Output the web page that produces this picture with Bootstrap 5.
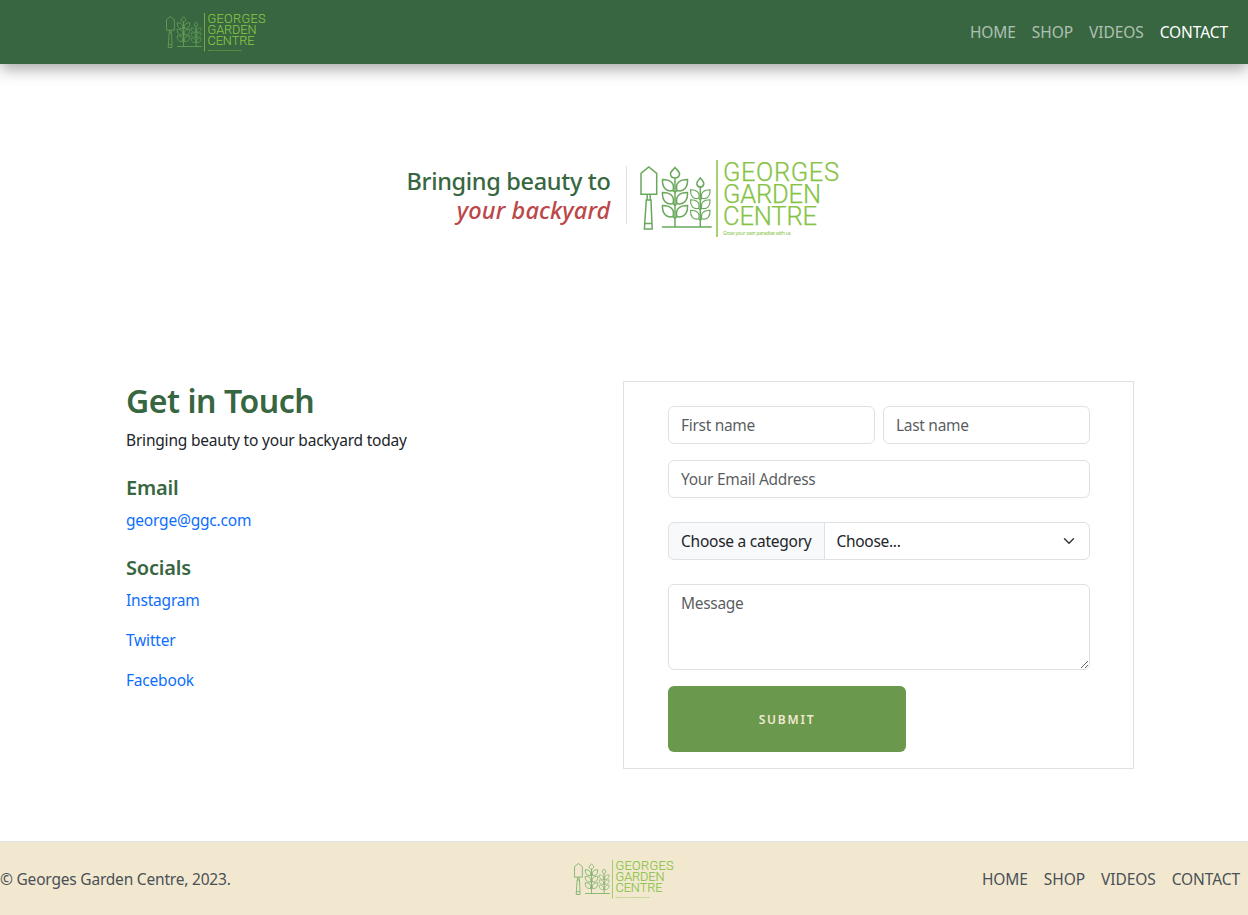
<!DOCTYPE html>
<html lang="en">
<head>
  <meta charset="UTF-8" />
  <meta name="viewport" content="width=device-width, initial-scale=1.0"/>
  <title>Contact - Georges Garden Centre</title>
  <link href="https://cdn.jsdelivr.net/npm/bootstrap@5.3.3/dist/css/bootstrap.min.css" rel="stylesheet" />
  <style>
    body {
      font-family: "Noto Sans", "Open Sans", sans-serif;
      font-size: 15.5px;
      line-height: 24px;
      letter-spacing: -0.2px;
      color: #212529;
    }
    .site-nav {
      height: 64px;
      background: #386641;
      box-shadow: 0 5px 15px rgba(0, 0, 0, .35);
      padding: 0 12px 0 165px;
    }
    .site-nav .nav-link {
      color: rgba(255, 255, 255, .6);
      font-size: 15.5px;
      letter-spacing: -0.08px;
      padding: 8px;
    }
    .site-nav .nav-link.active {
      color: #fff;
    }
    .logo-img {
      display: block;
      width: 202px;
      height: 80px;
    }
    .logo-sm {
      width: 102px;
      height: 40px;
    }
    .logo-icon {
      fill: none;
      stroke: #69a85b;
      stroke-width: 1.5;
    }
    .logo-text {
      fill: #86c344;
      stroke: #86c344;
      stroke-width: .25;
      font-family: Roboto, sans-serif;
      font-weight: 300;
      font-size: 25.5px;
      letter-spacing: 0;
    }
    .logo-tag {
      fill: #86c344;
      font-family: "Noto Sans", sans-serif;
      font-size: 5px;
      letter-spacing: 0;
    }
    .hero-wrap {
      padding: 94px 0 143px;
    }
    .hero-line {
      display: flow-root;
      align-self: flex-start;
      font-size: 23.5px;
      line-height: 29px;
      font-weight: 500;
      letter-spacing: -0.33px;
      color: #386641;
      text-align: right;
      padding-right: 16px;
      margin: 8px 12px 0 0;
      border-right: 1px solid #dee2e6;
    }
    .hero-line span {
      display: block;
      margin: 1px 0 -1px;
    }
    .hero-line em {
      color: #bc4749;
      letter-spacing: 0.13px;
    }
    .contact-wrap {
      width: 1020px;
    }
    .info-col {
      padding-left: 12px;
    }
    .green-head {
      color: #386641;
    }
    .title-head {
      font-weight: 600;
      letter-spacing: -0.45px;
      padding-top: 1px;
      margin-bottom: 8px;
    }
    .sub-head {
      font-weight: 600;
    }
    .form-box {
      border: 1px solid #dee2e6;
      margin-left: -1px;
      padding: 24px 43px 16px 44px;
    }
    .form-box .form-control,
    .form-box .form-select {
      font-size: 15.5px;
      line-height: 24px;
      letter-spacing: -0.3px;
    }
    .form-box .input-group-text {
      font-size: 15.5px;
      line-height: 24px;
      letter-spacing: -0.25px;
    }
    .form-box textarea {
      height: 86px;
    }
    .submit-btn {
      width: 238px;
      height: 66px;
      padding-top: 8px;
      background: #6a994e;
      color: #f2e8cf;
      border: 0;
      font-size: 12px;
      font-weight: 600;
      letter-spacing: 1.8px;
    }
    .site-foot {
      margin-top: 72px;
      height: 74px;
      background: #f2e8cf;
      border-top: 1px solid #dee2e6;
      color: #495057;
    }
    .site-foot .nav-link {
      color: #495057;
      font-size: 15.5px;
      letter-spacing: -0.08px;
      padding: 8px;
    }
  </style>
</head>
<body>
  <svg width="0" height="0" class="position-absolute">
    <defs>
      <path id="leaf" d="M2 5.5C0-2 4.5-5.5 12.5-5.5C13 2 9 7.5 2 5.5ZM2 5.5L0 7.5"/>
      <g id="leaf-pair">
        <use href="#leaf"/>
        <use href="#leaf" transform="scale(-1 1)"/>
      </g>
      <symbol id="ggc-logo" viewBox="0 0 202 80">
        <g class="logo-icon">
          <path d="M2 15.3L9.8 9L17.7 15.3V36.3H2Z"/>
          <path d="M8.2 36.3V42M11.2 36.3V42M7.3 42H12L13.2 71H5.4ZM5.8 65.5H12.8"/>
          <path d="M36 9.5C38.5 12.5 41 14 40.5 16.5C40 19 37.5 20 36 20C34.5 20 32 19 31.5 16.5C31 14 33.5 12.5 36 9.5Z"/>
          <path d="M36 20V69"/>
          <use href="#leaf-pair" transform="translate(36 27)"/>
          <use href="#leaf-pair" transform="translate(36 40)"/>
          <use href="#leaf-pair" transform="translate(36 53)"/>
          <path d="M61.3 20C63.2 22.5 65.2 23.8 64.8 26C64.4 28 62.5 29 61.3 29C60 29 58.2 28 57.8 26C57.4 23.8 59.4 22.5 61.3 20Z"/>
          <path d="M61.3 29V69"/>
          <use href="#leaf-pair" transform="translate(61.3 36) scale(.78)"/>
          <use href="#leaf-pair" transform="translate(61.3 46) scale(.78)"/>
          <use href="#leaf-pair" transform="translate(61.3 56.5) scale(.78)"/>
          <path d="M23 69H72.7"/>
        </g>
        <path d="M78 2V79" fill="none" stroke="#86c344" stroke-width="1.5"/>
        <text class="logo-text" x="84" y="22.5" textLength="116">GEORGES</text>
        <text class="logo-text" x="84" y="44.5" textLength="98">GARDEN</text>
        <text class="logo-text" x="84" y="66.5" textLength="94">CENTRE</text>
        <text class="logo-tag" x="84" y="77" textLength="68">Grow your own paradise with us</text>
      </symbol>
    </defs>
  </svg>

  <nav class="site-nav d-flex align-items-center justify-content-between">
    <a href="#"><svg class="logo-img logo-sm"><use href="#ggc-logo"/></svg></a>
    <ul class="nav">
      <li class="nav-item"><a class="nav-link" href="#">HOME</a></li>
      <li class="nav-item"><a class="nav-link" href="#">SHOP</a></li>
      <li class="nav-item"><a class="nav-link" href="#">VIDEOS</a></li>
      <li class="nav-item"><a class="nav-link active" href="#">CONTACT</a></li>
    </ul>
  </nav>

  <div class="hero-wrap d-flex justify-content-center align-items-center">
    <div class="hero-line"><span>Bringing beauty to<br><em>your backyard</em></span></div>
    <svg class="logo-img"><use href="#ggc-logo"/></svg>
  </div>

  <div class="contact-wrap mx-auto">
    <div class="row g-0">
      <div class="col-6 info-col">
        <h2 class="green-head title-head">Get in Touch</h2>
        <p class="mb-4">Bringing beauty to your backyard today</p>
        <h5 class="green-head sub-head">Email</h5>
        <p class="mb-4"><a class="text-decoration-none" href="#">george@ggc.com</a></p>
        <h5 class="green-head sub-head">Socials</h5>
        <p><a class="text-decoration-none" href="#">Instagram</a></p>
        <p><a class="text-decoration-none" href="#">Twitter</a></p>
        <p><a class="text-decoration-none" href="#">Facebook</a></p>
      </div>
      <div class="col-6">
        <form class="form-box">
          <div class="d-flex gap-2 mb-3">
            <input type="text" class="form-control" placeholder="First name" />
            <input type="text" class="form-control" placeholder="Last name" />
          </div>
          <input type="email" class="form-control mb-4" placeholder="Your Email Address" />
          <div class="input-group mb-4">
            <label class="input-group-text" for="category">Choose a category</label>
            <select class="form-select" id="category">
              <option selected>Choose...</option>
              <option>Plants</option>
              <option>Tools</option>
            </select>
          </div>
          <textarea class="form-control mb-3" placeholder="Message"></textarea>
          <button type="submit" class="btn submit-btn">SUBMIT</button>
        </form>
      </div>
    </div>
  </div>

  <footer class="site-foot row g-0 align-items-center">
    <div class="col-4">&copy; Georges Garden Centre, 2023.</div>
    <div class="col-4 d-flex justify-content-center"><svg class="logo-img logo-sm"><use href="#ggc-logo"/></svg></div>
    <div class="col-4">
      <ul class="nav justify-content-end">
        <li class="nav-item"><a class="nav-link" href="#">HOME</a></li>
        <li class="nav-item"><a class="nav-link" href="#">SHOP</a></li>
        <li class="nav-item"><a class="nav-link" href="#">VIDEOS</a></li>
        <li class="nav-item"><a class="nav-link" href="#">CONTACT</a></li>
      </ul>
    </div>
  </footer>
  <script src="https://cdn.jsdelivr.net/npm/bootstrap@5.3.3/dist/js/bootstrap.bundle.min.js"></script>
</body>
</html>
